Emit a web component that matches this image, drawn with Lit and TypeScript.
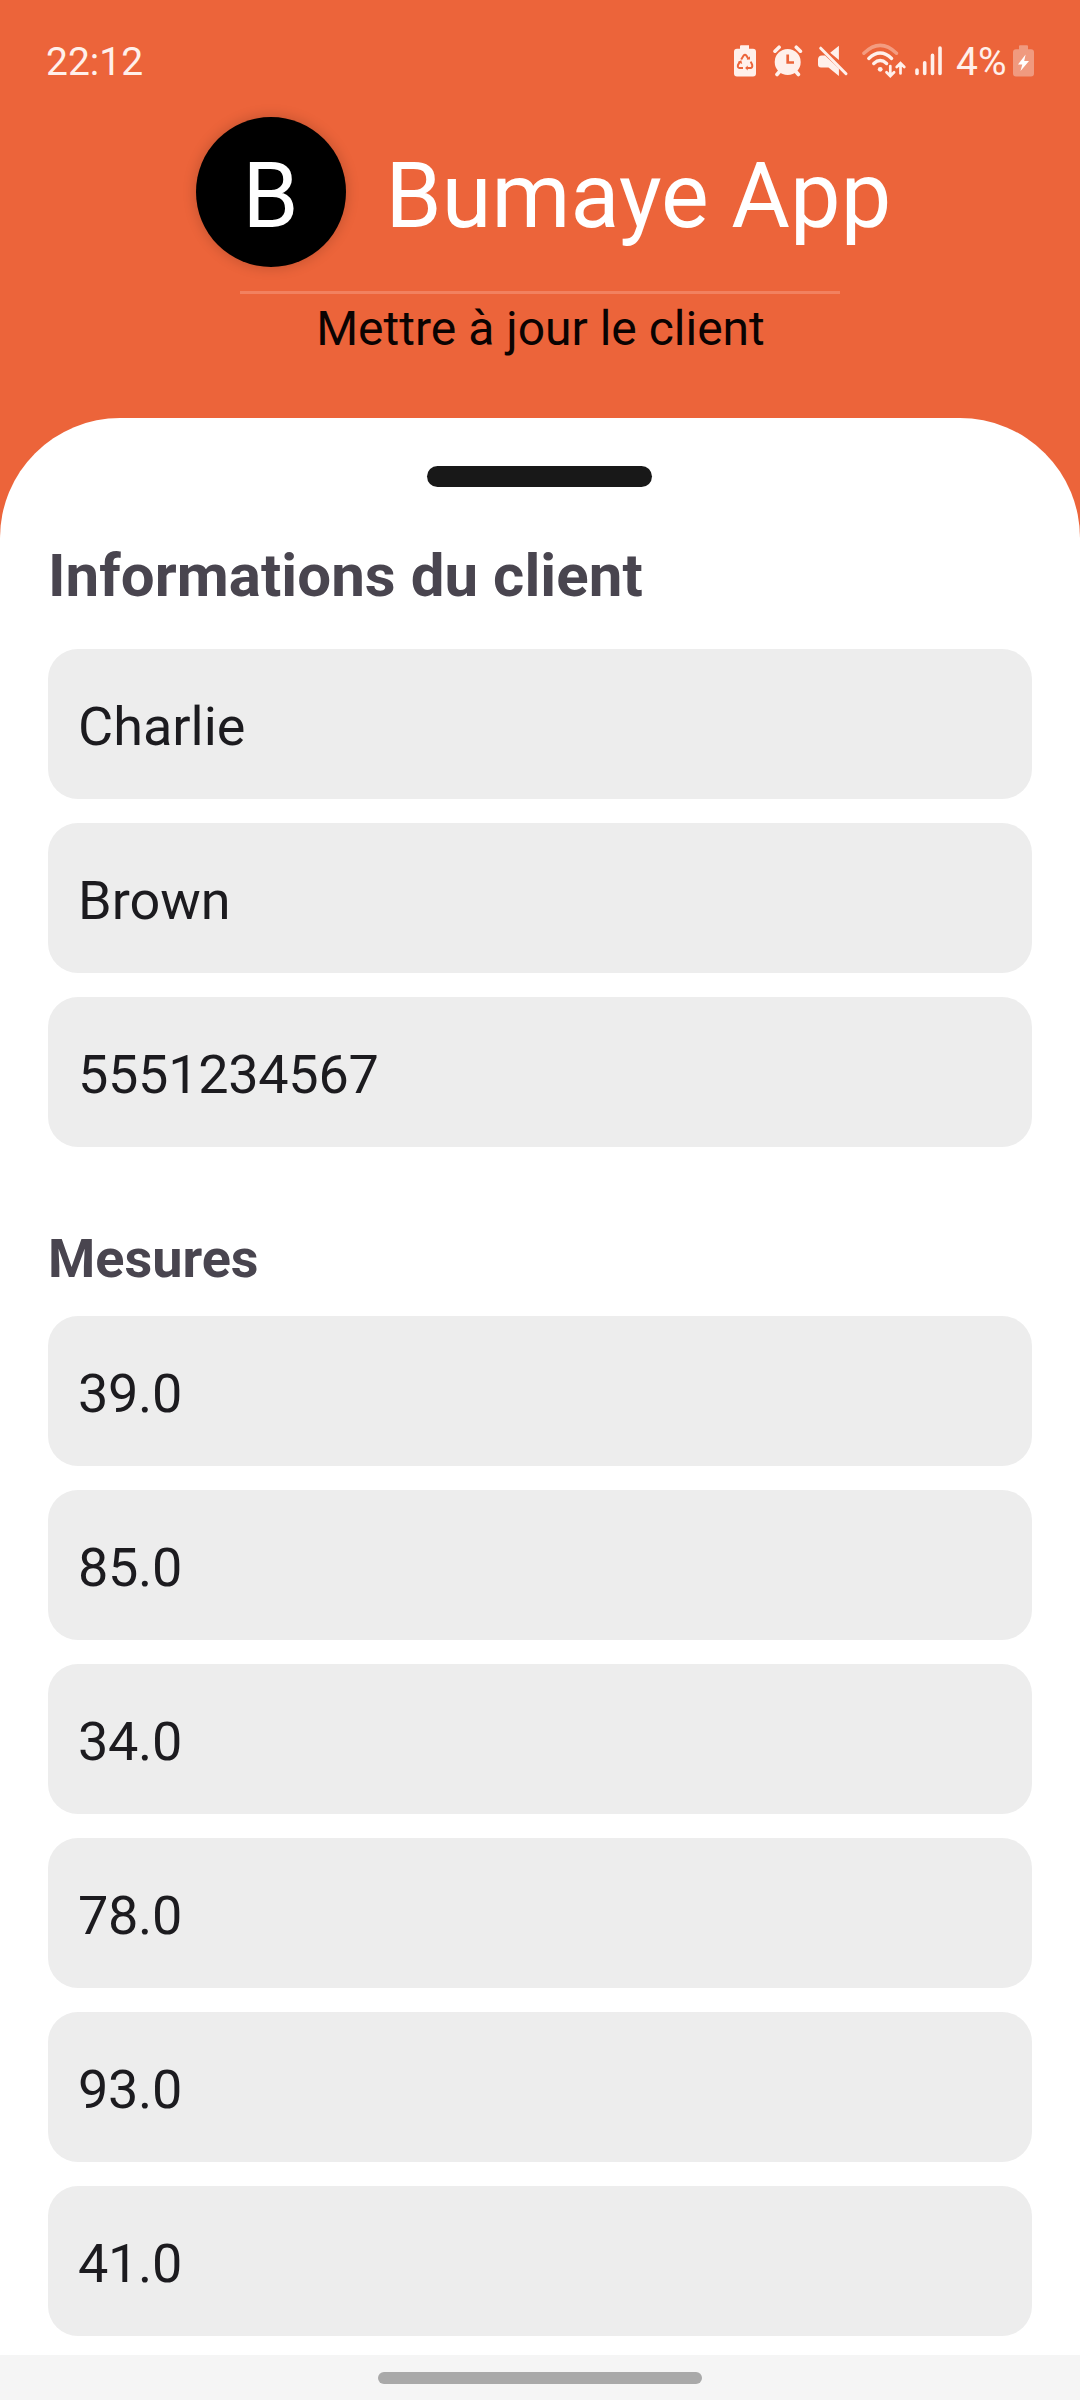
import { LitElement, html, css } from "lit";
import { customElement, property } from "lit/decorators.js";
import { classMap } from "lit/directives/class-map.js";

@customElement("status-bar")
class StatusBar extends LitElement {
  static styles = css`
    :host {
      display: flex;
      justify-content: space-between;
      align-items: flex-start;
      height: 117px;
      box-sizing: border-box;
      padding: 38px 46px 0;
      color: #fff0eb;
      font: 400 39px/46px Roboto, sans-serif;
    }
    .time,
    .level {
      padding-top: 1px;
    }
    .right {
      display: flex;
      align-items: flex-start;
    }
    svg {
      display: block;
      height: 46px;
      flex: none;
    }
    .faint {
      opacity: 0.4;
    }
    .level {
      margin-left: 12px;
      width: 57px;
      white-space: nowrap;
    }
  `;

  render() {
    return html`
      <span class="time">22:12</span>
      <div class="right">
        <svg width="39" height="46" viewBox="0 0 39 46">
          <path fill="currentColor" d="M7 7.3h8v3.5h4a3 3 0 0 1 3 3V35.500a3 3 0 0 1-3 3H3a3 3 0 0 1-3-3V13.800a3 3 0 0 1 3-3h3V8.300a1 1 0 0 1 1-1z" />
          <g fill="none" stroke="#ec643a" stroke-width="2">
            <path d="M7.200 21.500L9.600 17.600Q11 15.900 12.400 17.600L14.500 21" />
            <path d="M16.700 23.700L18.200 26.900Q18.700 29.900 16.300 30H12.700" />
            <path d="M9 30H5.500Q3.300 29.800 4 27L6 23.500" />
          </g>
          <path fill="#ec643a" d="M12.700 21.600h3.300V18.200zM13.700 27.400v5.200l-2.600-2.600zM3.800 24.100l3.500-1.800.9 3.700z" />
        </svg>
        <svg width="45" height="46" viewBox="39 0 45 46">
          <circle cx="53.700" cy="24" r="13" fill="currentColor" />
          <g stroke="currentColor" stroke-width="3.600" stroke-linecap="round">
            <path d="M41 13.200l4.100-4M66.400 13.200l-4.100-4M46 33l-3 3.500M61.400 33l3 3.500" />
          </g>
          <path d="M53.700 16.500V24.500H60" fill="none" stroke="#ec643a" stroke-width="2.700" />
        </svg>
        <svg width="44" height="46" viewBox="84 0 44 46">
          <path fill="currentColor" d="M104.900 7.800V22L96.200 14.800zM84 21.300a4 4 0 0 1 4-3.800h3L104.900 30.500V38L94.500 29.500H87a3 3 0 0 1-3-3z" />
          <path d="M86.700 10.200L112 35.700" stroke="currentColor" stroke-width="3" stroke-linecap="round" />
        </svg>
        <svg width="52" height="46" viewBox="128 0 52 46">
          <g fill="none" stroke="currentColor" stroke-width="3.400" stroke-linecap="round">
            <path class="faint" d="M129.900 15.200Q146.200 -.5 162.500 15.200" />
            <path d="M134.800 20.400Q146.200 9.700 157.600 20.400" />
            <path d="M139.800 25.500Q146.200 19.600 152.600 25.500" />
          </g>
          <circle cx="146.200" cy="31.300" r="2.400" fill="currentColor" />
          <path d="M156.300 28v9.300M152.500 34.200l3.800 3.800 3.800-3.800M166.500 35.500V25.700M162.700 29l3.800-3.800 3.800 3.800" fill="none" stroke="currentColor" stroke-width="2.700" stroke-linecap="round" />
        </svg>
        <svg width="30" height="46" viewBox="180 0 30 46">
          <path d="M183 32v3.500M190.700 24.800v10.700M198.500 17.400v18.100M206 10v25.500" stroke="currentColor" stroke-width="3.600" stroke-linecap="round" />
        </svg>
        <span class="level">4%</span>
        <svg width="21" height="46" viewBox="0 0 21 46">
          <path class="faint" fill="#f7ebe8" d="M7 7.300h7a1 1 0 0 1 1 1v3h3a3 3 0 0 1 3 3V35.500a3 3 0 0 1-3 3H3a3 3 0 0 1-3-3V14.300a3 3 0 0 1 3-3h3v-3a1 1 0 0 1 1-1z" />
          <path fill="#fff" d="M12.600 16.500L5 26.500h4.300L7.500 33 16 23h-4.800z" />
        </svg>
      </div>
    `;
  }
}

@customElement("text-entry")
class TextEntry extends LitElement {
  @property() value = "";

  static styles = css`
    :host {
      display: block;
    }
    .field {
      display: block;
      width: 100%;
      height: 150px;
      box-sizing: border-box;
      margin: 0;
      padding: 5px 30px 0;
      border: 0;
      border-radius: 30px;
      outline: none;
      background: #ededed;
      color: #1c1b1f;
      font: 400 54px/64px Roboto, sans-serif;
    }
    .numeric {
      letter-spacing: -0.3px;
    }
  `;

  render() {
    const classes = { field: true, numeric: /^[\d.]+$/.test(this.value) };
    return html`<input class=${classMap(classes)} type="text" .value=${this.value} />`;
  }
}

@customElement("app-root")
class AppRoot extends LitElement {
  static styles = css`
    :host {
      display: flex;
      flex-direction: column;
      width: 1080px;
      height: 2400px;
      overflow: hidden;
      background: #ec643a;
      font-family: Roboto, sans-serif;
    }
    .header {
      display: flex;
      flex-direction: column;
      align-items: center;
      height: 301px;
      flex: none;
    }
    .brand {
      display: flex;
      align-items: center;
      gap: 40px;
      height: 150px;
      padding-left: 7px;
      color: #fff;
      font-size: 90px;
      line-height: 106px;
    }
    .avatar {
      display: flex;
      align-items: center;
      justify-content: center;
      width: 150px;
      height: 150px;
      box-sizing: border-box;
      border-radius: 50%;
      background: #000;
      box-shadow: 0 0 14px rgba(0, 0, 0, 0.2);
    }
    .letter,
    .name {
      padding-top: 9px;
    }
    .name {
      letter-spacing: 0.1px;
    }
    .rule {
      width: 600px;
      height: 3px;
      margin-top: 24px;
      background: #f2815f;
    }
    .subtitle {
      margin-top: 6px;
      color: #0a0302;
      font-size: 48px;
      line-height: 58px;
      padding-left: 1px;
    }
    .sheet {
      display: flex;
      flex-direction: column;
      flex: 1;
      min-height: 0;
      box-sizing: border-box;
      padding: 48px 48px 0;
      border-radius: 120px 120px 0 0;
      background: #fff;
    }
    .grip {
      align-self: center;
      width: 225px;
      height: 21px;
      margin-right: 1px;
      border-radius: 10.500px;
      background: #181818;
    }
    h2 {
      margin: 0;
      color: #49454f;
      font-weight: 700;
    }
    .info {
      margin-top: 54px;
      font-size: 60px;
      line-height: 70px;
      letter-spacing: 0.05px;
    }
    .measures {
      margin-top: 80px;
      font-size: 54px;
      line-height: 64px;
    }
    .fields {
      display: grid;
      gap: 24px;
    }
    .info + .fields {
      margin-top: 38px;
    }
    .measures + .fields {
      margin-top: 25px;
    }
    .nav {
      display: flex;
      justify-content: center;
      flex: none;
      height: 45px;
      box-sizing: border-box;
      padding-top: 17px;
      background: #f5f5f5;
    }
    .pill {
      width: 324px;
      height: 12px;
      border-radius: 6px;
      background: #a9a9a9;
    }
  `;

  private client = ["Charlie", "Brown", "5551234567"];
  private sizes = ["39.0", "85.0", "34.0", "78.0", "93.0", "41.0"];

  render() {
    return html`
      <status-bar></status-bar>
      <div class="header">
        <div class="brand">
          <div class="avatar"><span class="letter">B</span></div>
          <span class="name">Bumaye App</span>
        </div>
        <div class="rule"></div>
        <div class="subtitle">Mettre à jour le client</div>
      </div>
      <div class="sheet">
        <div class="grip"></div>
        <h2 class="info">Informations du client</h2>
        <div class="fields">${this.client.map((v) => html`<text-entry .value=${v}></text-entry>`)}</div>
        <h2 class="measures">Mesures</h2>
        <div class="fields">${this.sizes.map((v) => html`<text-entry .value=${v}></text-entry>`)}</div>
      </div>
      <div class="nav"><div class="pill"></div></div>
    `;
  }
}
